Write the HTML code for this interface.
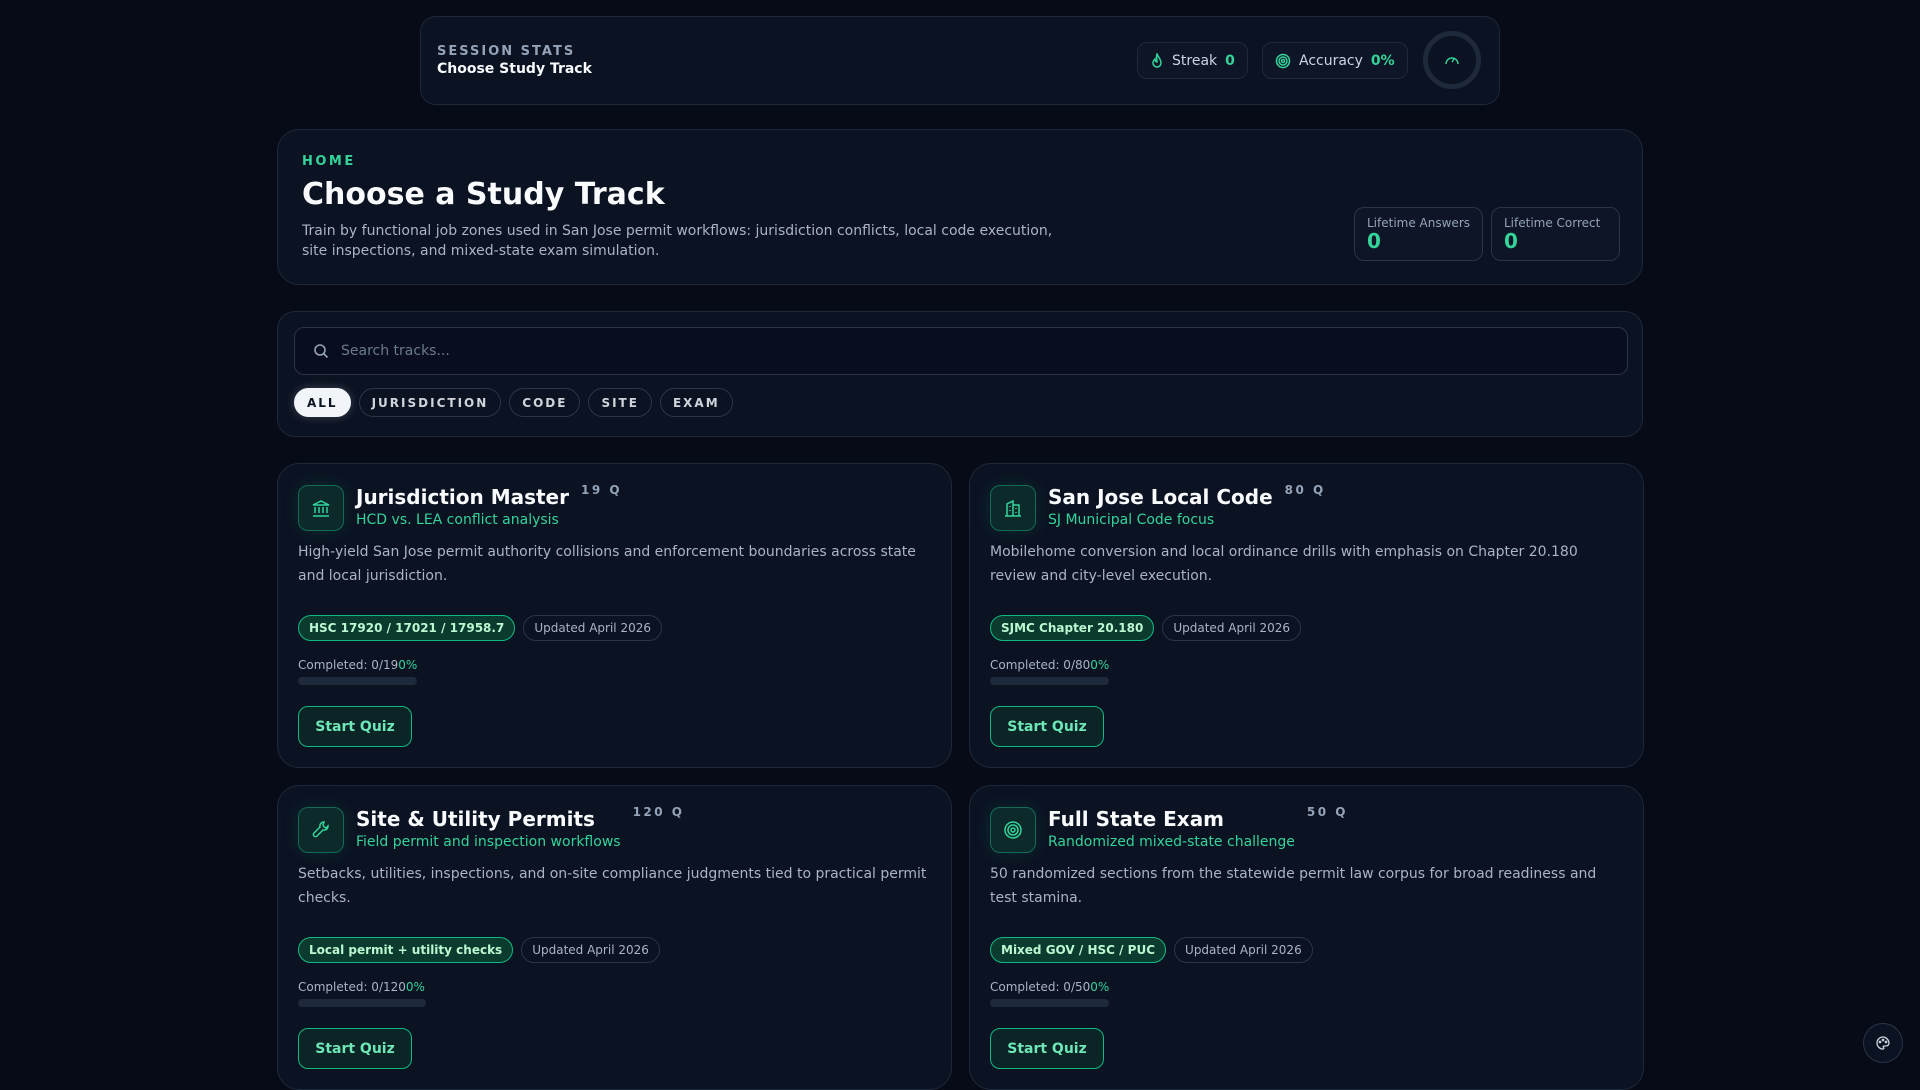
<!DOCTYPE html>
<html><head><meta charset="utf-8"><style>
*{box-sizing:border-box;margin:0;padding:0}
body{width:1920px;height:1080px;overflow:hidden;background:#060b17;font-family:"DejaVu Sans","Liberation Sans",sans-serif;color:#e5e7eb;position:relative}
.panel{position:absolute;background:#0b1222;border:1px solid #1e293b;border-radius:22px}
.top{left:420px;top:16px;width:1080px;height:89px;border-radius:16px}
.lbl{position:absolute;left:16px;top:27px;font-size:13px;font-weight:bold;letter-spacing:2px;color:#94a3b8}
.ttl{position:absolute;left:16px;top:44px;font-size:14px;font-weight:bold;color:#f8fafc}
.pill{position:absolute;top:25px;height:37px;border:1px solid #1e293b;border-radius:10px;background:#0d1526;display:flex;align-items:center;padding:0 12px;font-size:14px;color:#cbd5e1;gap:8px}
.pill b{color:#34d399}
.ring{position:absolute;left:1002px;top:14px;width:58px;height:58px;border-radius:50%;border:5px solid #1e293b;display:flex;align-items:center;justify-content:center}
.hero{left:277px;top:129px;width:1366px;height:156px}
.home{position:absolute;left:24px;top:24px;font-size:13px;font-weight:bold;letter-spacing:2.5px;color:#34d399}
.h1{position:absolute;left:24px;top:47px;font-size:30px;font-weight:bold;color:#f8fafc}
.desc{position:absolute;left:24px;top:91px;width:760px;font-size:14px;line-height:20px;color:#aab4c3}
.life{position:absolute;top:77px;width:129px;height:54px;border:1px solid #2a3547;border-radius:10px;background:#0d1526;padding:8px 12px}
.life span{display:block;font-size:12px;color:#94a3b8}
.life b{display:block;font-size:20px;color:#34d399;line-height:22px}
.search{left:277px;top:311px;width:1366px;height:126px;border-radius:18px}
.inp{position:absolute;left:16px;top:15px;width:1334px;height:48px;border:1px solid #2a3547;border-radius:10px;background:#080e1d;display:flex;align-items:center;padding-left:18px;gap:12px;font-size:14px;color:#6b7a8f}
.chips{position:absolute;left:16px;top:76px;display:flex;gap:8px}
.chip{height:29px;border:1px solid #2a3547;border-radius:15px;padding:0 12px;display:flex;align-items:center;font-size:12px;font-weight:bold;letter-spacing:2px;color:#d1d5db}
.chip.on{background:#f1f5f9;color:#0b1222;border-color:#f1f5f9;box-shadow:0 0 10px rgba(255,255,255,.2)}
.card{position:absolute;width:675px;height:305px;background:#0b1222;border:1px solid #1e293b;border-radius:22px}
.ic{position:absolute;left:20px;top:21px;width:46px;height:46px;border:1px solid #136b54;border-radius:10px;background:#0d2a2a;display:flex;align-items:center;justify-content:center;box-shadow:0 0 18px rgba(16,185,129,.15)}
.hd{position:absolute;left:78px;top:19px;display:flex;align-items:flex-start;gap:12px}
.ct{font-size:20px;font-weight:bold;color:#f8fafc;line-height:28px}
.cs{font-size:14px;color:#34d399;margin-top:1px}
.q{font-size:12px;font-weight:bold;letter-spacing:2.5px;color:#94a3b8;margin-top:0}
.cd{position:absolute;left:20px;top:76px;width:630px;font-size:14px;line-height:24px;color:#aab4c3}
.tags{position:absolute;left:20px;top:151px;display:flex;gap:8px}
.tg{height:26px;border-radius:13px;padding:0 10px;display:flex;align-items:center;font-size:12px}
.tg.g{background:#0b3b2f;border:1px solid #10b981;color:#bbf7d0;font-weight:bold}
.tg.u{border:1px solid #2a3547;color:#aab4c3}
.comp{position:absolute;left:20px;top:194px;font-size:12px;color:#aab4c3}
.comp i{font-style:normal;color:#34d399}
.bar{position:absolute;left:20px;top:213px;height:8px;border-radius:4px;background:#1e293b}
.btn{position:absolute;left:20px;top:242px;width:114px;height:41px;border:1px solid #10b981;border-radius:10px;background:#0b2426;color:#6ee7b7;font-size:14px;font-weight:bold;display:flex;align-items:center;justify-content:center}
.fab{position:absolute;left:1863px;top:1023px;width:40px;height:40px;border-radius:50%;border:1px solid #2a3547;background:#0b1222;display:flex;align-items:center;justify-content:center}
</style></head><body>
<div class="panel top">
<div class="lbl">SESSION STATS</div>
<div class="ttl">Choose Study Track</div>
<div class="pill" style="left:716px"><svg width="14" height="16" viewBox="0 0 14 16" fill="none" stroke="#34d399" stroke-width="1.5"><path d="M7 1c1 3 4 5 4 9a4 4 0 0 1-8 0c0-2 1-3 2-4 0 2 1 3 2 3 0-3-1-5 0-8z"/></svg>Streak <b>0</b></div>
<div class="pill" style="left:841px"><svg width="16" height="16" viewBox="0 0 16 16" fill="none" stroke="#34d399" stroke-width="1.5"><circle cx="8" cy="8" r="6.5"/><circle cx="8" cy="8" r="4"/><circle cx="8" cy="8" r="1.5"/></svg>Accuracy <b>0%</b></div>
<div class="ring"><svg width="16" height="14" viewBox="0 0 16 14" fill="none" stroke="#34d399" stroke-width="1.4"><path d="M2 11a6 6 0 1 1 12 0"/><path d="M8 9l2-3"/></svg></div>
</div>
<div class="panel hero">
<div class="home">HOME</div>
<div class="h1">Choose a Study Track</div>
<div class="desc">Train by functional job zones used in San Jose permit workflows: jurisdiction conflicts, local code execution, site inspections, and mixed-state exam simulation.</div>
<div class="life" style="left:1076px"><span>Lifetime Answers</span><b>0</b></div>
<div class="life" style="left:1213px"><span>Lifetime Correct</span><b>0</b></div>
</div>
<div class="panel search">
<div class="inp"><svg width="16" height="16" viewBox="0 0 16 16" fill="none" stroke="#94a3b8" stroke-width="1.6"><circle cx="7" cy="7" r="5"/><path d="M11 11l3.5 3.5"/></svg>Search tracks...</div>
<div class="chips"><div class="chip on">ALL</div><div class="chip">JURISDICTION</div><div class="chip">CODE</div><div class="chip">SITE</div><div class="chip">EXAM</div></div>
</div>

<div class="card" style="left:277px;top:463px">
<div class="ic"><svg width="20" height="20" viewBox="0 0 20 20" fill="none" stroke="#34d399" stroke-width="1.5"><path d="M2 7l8-4 8 4zM4 9v6M8 9v6M12 9v6M16 9v6M2 18h16"/></svg></div>
<div class="hd"><div><div class="ct">Jurisdiction Master</div><div class="cs">HCD vs. LEA conflict analysis</div></div><div class="q">19 Q</div></div>
<div class="cd">High-yield San Jose permit authority collisions and enforcement boundaries across state and local jurisdiction.</div>
<div class="tags"><div class="tg g">HSC 17920 / 17021 / 17958.7</div><div class="tg u">Updated April 2026</div></div>
<div class="comp">Completed: 0/19<i>0%</i></div><div class="bar" style="width:119px"></div>
<div class="btn">Start Quiz</div>
</div>
<div class="card" style="left:969px;top:463px">
<div class="ic"><svg width="20" height="20" viewBox="0 0 20 20" fill="none" stroke="#34d399" stroke-width="1.5"><path d="M4 18V6l6-3v15M10 7h6v11M2 18h16M7 8v1M7 12v1M13 10v1M13 14v1"/></svg></div>
<div class="hd"><div><div class="ct">San Jose Local Code</div><div class="cs">SJ Municipal Code focus</div></div><div class="q">80 Q</div></div>
<div class="cd">Mobilehome conversion and local ordinance drills with emphasis on Chapter 20.180 review and city-level execution.</div>
<div class="tags"><div class="tg g">SJMC Chapter 20.180</div><div class="tg u">Updated April 2026</div></div>
<div class="comp">Completed: 0/80<i>0%</i></div><div class="bar" style="width:119px"></div>
<div class="btn">Start Quiz</div>
</div>
<div class="card" style="left:277px;top:785px">
<div class="ic"><svg width="20" height="20" viewBox="0 0 20 20" fill="none" stroke="#34d399" stroke-width="1.5"><path d="M13 2a4 4 0 0 0-4 5L3 13a2 2 0 0 0 3 3l6-6a4 4 0 0 0 5-4l-2 2-2-1-1-2z"/></svg></div>
<div class="hd"><div><div class="ct">Site &amp; Utility Permits</div><div class="cs">Field permit and inspection workflows</div></div><div class="q">120 Q</div></div>
<div class="cd">Setbacks, utilities, inspections, and on-site compliance judgments tied to practical permit checks.</div>
<div class="tags"><div class="tg g">Local permit + utility checks</div><div class="tg u">Updated April 2026</div></div>
<div class="comp">Completed: 0/120<i>0%</i></div><div class="bar" style="width:128px"></div>
<div class="btn">Start Quiz</div>
</div>
<div class="card" style="left:969px;top:785px">
<div class="ic"><svg width="20" height="20" viewBox="0 0 20 20" fill="none" stroke="#34d399" stroke-width="1.5"><circle cx="10" cy="10" r="8"/><circle cx="10" cy="10" r="5"/><circle cx="10" cy="10" r="2"/></svg></div>
<div class="hd"><div><div class="ct">Full State Exam</div><div class="cs">Randomized mixed-state challenge</div></div><div class="q">50 Q</div></div>
<div class="cd">50 randomized sections from the statewide permit law corpus for broad readiness and test stamina.</div>
<div class="tags"><div class="tg g">Mixed GOV / HSC / PUC</div><div class="tg u">Updated April 2026</div></div>
<div class="comp">Completed: 0/50<i>0%</i></div><div class="bar" style="width:119px"></div>
<div class="btn">Start Quiz</div>
</div>
<div class="fab"><svg width="16" height="16" viewBox="0 0 16 16" fill="none" stroke="#cbd5e1" stroke-width="1.3"><path d="M8 2a6 6 0 1 0 0 12c1 0 1-1 .5-1.5S8 11 9 11h2a3 3 0 0 0 3-3c0-3-3-6-6-6z"/><circle cx="5" cy="7" r=".7"/><circle cx="8" cy="5" r=".7"/><circle cx="11" cy="7" r=".7"/></svg></div>
</body></html>
